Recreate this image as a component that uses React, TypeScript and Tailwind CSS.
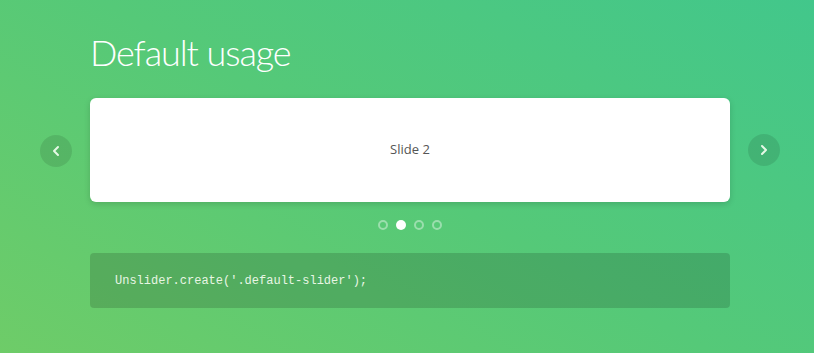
import { ChevronLeft, ChevronRight } from 'lucide-react';

export default function App() {
  const active = 1;

  return (
    <div className="w-[814px] h-[353px] overflow-hidden bg-[linear-gradient(30deg,#6ecc68_0%,#55c978_50%,#42c78b_100%)] font-['Lato',sans-serif]">
      <div className="w-[640px] ml-[90px] pt-[28px]">
        <h1 className="text-[36px] leading-[48px] font-light text-white tracking-[-0.03em] font-['Lato',sans-serif]">
          Default usage
        </h1>

        <div className="relative mt-[22px]">
          <button className="absolute left-[-50px] top-[37px] w-[32px] h-[32px] rounded-full bg-black/10 flex items-center justify-center text-[#e6f8e6]">
            <ChevronLeft size={16} strokeWidth={3} />
          </button>
          <div className="h-[104px] bg-white rounded-[6px] shadow-[0_2px_6px_rgba(0,0,0,0.15)] flex items-center justify-center">
            <span className="text-[13px] text-[#555] font-['Open_Sans',sans-serif]">Slide 2</span>
          </div>
          <button className="absolute right-[-50px] top-[36px] w-[32px] h-[32px] rounded-full bg-black/10 flex items-center justify-center text-[#e6f8e6]">
            <ChevronRight size={16} strokeWidth={3} />
          </button>
        </div>

        <div className="flex justify-center gap-[8px] mt-[18px]">
          {[0, 1, 2, 3].map((i) => (
            <span
              key={i}
              className={
                i === active
                  ? 'w-[10px] h-[10px] rounded-full bg-white'
                  : 'w-[10px] h-[10px] rounded-full border-2 border-white/40'
              }
            />
          ))}
        </div>

        <div className="mt-[23px] h-[55px] rounded-[4px] bg-black/15 flex items-center px-[25px]">
          <code className="text-[12px] text-[#e8f6e4] font-['Liberation_Mono',monospace]">
            Unslider.create('.default-slider');
          </code>
        </div>
      </div>
    </div>
  );
}
